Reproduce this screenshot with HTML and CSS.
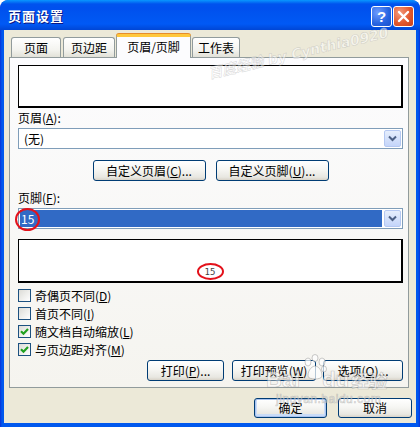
FILE: index.html
```html
<!DOCTYPE html>
<html lang="zh-CN">
<head>
    <meta charset="UTF-8">
    <title>页面设置</title>
    <link rel="stylesheet" href="styles.css">
</head>
<body>
<div class="window">
    <div class="titlebar">
        <span class="title">页面设置</span>
        <div class="caption-btns">
            <span class="cap-btn help">?</span>
            <span class="cap-btn close">
                <svg width="13" height="13" viewBox="0 0 13 13"><path d="M2 2 L11 11 M11 2 L2 11" stroke="#fff" stroke-width="2.4" stroke-linecap="round"/></svg>
            </span>
        </div>
    </div>

    <div class="client">
        <div class="tabs">
            <div class="tab tab-page">页面</div>
            <div class="tab tab-margin">页边距</div>
            <div class="tab tab-hf active">页眉/页脚</div>
            <div class="tab tab-sheet">工作表</div>
        </div>

        <div class="panel">
            <div class="preview preview-header"></div>

            <div class="label">页眉(<u>A</u>):</div>
            <div class="combo">
                <span class="combo-text">(无)</span>
                <span class="drop"><svg width="9" height="7" viewBox="0 0 9 7"><path d="M1 1.5 L4.5 5 L8 1.5" fill="none" stroke="#4D6185" stroke-width="2"/></svg></span>
            </div>

            <div class="custom-row">
                <button class="btn btn-custom">自定义页眉(<u>C</u>)...</button>
                <button class="btn btn-custom">自定义页脚(<u>U</u>)...</button>
            </div>

            <div class="label label-footer">页脚(<u>F</u>):</div>
            <div class="combo">
                <span class="combo-text selected">15</span>
                <span class="drop"><svg width="9" height="7" viewBox="0 0 9 7"><path d="M1 1.5 L4.5 5 L8 1.5" fill="none" stroke="#4D6185" stroke-width="2"/></svg></span>
                <span class="mark mark-combo"></span>
            </div>

            <div class="preview preview-footer">
                <span class="page-num">15<span class="mark mark-num"></span></span>
            </div>

            <div class="checks">
                <label class="check-row"><span class="box"></span>奇偶页不同(<u>D</u>)</label>
                <label class="check-row"><span class="box"></span>首页不同(<u>I</u>)</label>
                <label class="check-row"><span class="box checked"><svg width="9" height="9" viewBox="0 0 9 9"><path d="M1 4.2 L3.5 6.7 L8 2" fill="none" stroke="#21A121" stroke-width="2.2"/></svg></span>随文档自动缩放(<u>L</u>)</label>
                <label class="check-row"><span class="box checked"><svg width="9" height="9" viewBox="0 0 9 9"><path d="M1 4.2 L3.5 6.7 L8 2" fill="none" stroke="#21A121" stroke-width="2.2"/></svg></span>与页边距对齐(<u>M</u>)</label>
            </div>

            <div class="panel-btns">
                <button class="btn btn-print">打印(<u>P</u>)...</button>
                <button class="btn btn-preview">打印预览(<u>W</u>)</button>
                <button class="btn btn-options">选项(<u>O</u>)...</button>
            </div>
        </div>

        <div class="dialog-btns">
            <button class="btn btn-ok">确定</button>
            <button class="btn btn-cancel">取消</button>
        </div>
    </div>

    <!-- watermarks over the screenshot -->
    <div class="wm-author">百度经验 by Cynthia0920</div>
    <div class="wm-baidu">
        <div class="wm-logo">
            <span>Bai</span>
            <svg class="wm-paw" width="26" height="28" viewBox="0 0 26 28">
                <g fill="rgba(255,255,255,0.7)" stroke="rgba(140,140,140,0.45)" stroke-width="1">
                    <ellipse cx="6" cy="8" rx="3" ry="4"/>
                    <ellipse cx="13" cy="4" rx="3" ry="3.5"/>
                    <ellipse cx="20" cy="8" rx="3" ry="4"/>
                    <ellipse cx="22" cy="15" rx="2.5" ry="3"/>
                    <path d="M6 22 C6 15 11 12 13 12 C16 12 20 16 20 22 C20 26 6 26 6 22 Z"/>
                </g>
            </svg>
            <span>du</span>
            <span class="wm-jy">经验</span>
        </div>
        <div class="wm-url">jingyan.baidu.com</div>
    </div>
</div>
</body>
</html>
```

FILE: styles.css
```css
body {
    margin: 0;
    font-family: "Noto Sans CJK SC", "Liberation Sans", sans-serif;
    font-size: 12px;
    color: #000;
}

.window {
    position: relative;
    width: 420px;
    height: 427px;
    box-sizing: border-box;
    display: flex;
    flex-direction: column;
    background: linear-gradient(90deg, #0831D9, #0058EE 2px, #0058EE 418px, #0831D9);
    border-radius: 8px 8px 0 0;
    overflow: hidden;
}

.titlebar {
    height: 30px;
    flex: none;
    display: flex;
    align-items: center;
    justify-content: space-between;
    padding: 0 6px 0 8px;
    background: linear-gradient(#0997FF, #0053EE 4px, #0050EE 8px, #0055F0 50%, #0059F5 80%, #0046D5);
    border-radius: 8px 8px 0 0;
}

.title {
    color: #fff;
    font-weight: bold;
    font-size: 13px;
    letter-spacing: 1px;
    text-shadow: 1px 1px 0 #0A1883;
}

.caption-btns {
    display: flex;
    gap: 1px;
    padding-top: 2px;
}

.cap-btn {
    width: 19px;
    height: 19px;
    border: 1px solid #fff;
    border-radius: 3px;
    display: flex;
    align-items: center;
    justify-content: center;
    color: #fff;
    font-family: "Liberation Sans", sans-serif;
    font-weight: bold;
    font-size: 15px;
}

.help {
    background: radial-gradient(circle at 30% 30%, #6E9CFF, #2663E0 60%, #1A4FCB);
}

.close {
    background: radial-gradient(circle at 30% 30%, #F29A7C, #E2582E 55%, #C8401A);
}

.client {
    flex: 1;
    margin: 0 4px 4px;
    background: #ECE9D8;
}

/* tabs */
.tabs {
    height: 27px;
    display: flex;
    align-items: flex-end;
    gap: 2px;
    padding-left: 7px;
}

.tab {
    height: 20px;
    box-sizing: border-box;
    border: 1px solid #919B9C;
    border-bottom: none;
    border-radius: 3px 3px 0 0;
    background: linear-gradient(#FFFFFF, #F4F4F0 60%, #E2E1D8);
    text-align: center;
    line-height: 19px;
}

.tab-page { width: 50px; }
.tab-margin { width: 52px; }
.tab-sheet { width: 48px; }

.tab-hf {
    width: 75px;
    margin: 0 -1px;
}

.tab.active {
    position: relative;
    height: 24px;
    margin-bottom: -1px;
    background: #FCFCFE;
    border-top: 3px solid #FFC83C;
    box-shadow: 0 -1px 0 #E68B2C;
    line-height: 19px;
}

/* panel */
.panel {
    width: 400px;
    box-sizing: border-box;
    margin-left: 5px;
    border: 1px solid #919B9C;
    background: linear-gradient(#FCFCFE, #F5F4EF);
    padding: 7px 5px 6px 8px;
}

.preview {
    box-sizing: border-box;
    background: #fff;
    border: 1px solid #000;
    border-right-width: 2px;
    border-bottom-width: 2px;
}

.preview-header {
    height: 43px;
}

.preview-footer {
    height: 44px;
    margin-top: 10px;
    display: flex;
    justify-content: center;
    align-items: flex-end;
    padding-bottom: 4px;
}

.label {
    margin-top: 2px;
    height: 16px;
    line-height: 16px;
}

.label-footer {
    margin-top: 9px;
}

.combo {
    position: relative;
    height: 21px;
    box-sizing: border-box;
    margin-top: 2px;
    border: 1px solid #7F9DB9;
    background: #fff;
    display: flex;
}

.combo-text {
    flex: 1;
    line-height: 19px;
    padding-left: 5px;
}

.combo-text.selected {
    margin: 1px;
    padding-left: 1px;
    background: #316AC5;
    color: #fff;
    line-height: 17px;
}

.drop {
    width: 15px;
    margin: 1px;
    border: 1px solid #B5C8F2;
    border-radius: 2px;
    background: linear-gradient(#E6EEFC, #C4D5FA);
    display: flex;
    align-items: center;
    justify-content: center;
}

/* red annotation ellipses */
.mark {
    position: absolute;
    border: 2px solid #E3121B;
    border-radius: 50%;
    box-sizing: border-box;
}

.mark-combo {
    left: -4px;
    top: -1px;
    width: 25px;
    height: 23px;
}

.page-num {
    position: relative;
    font-family: "DejaVu Sans Mono", monospace;
    font-size: 9px;
    color: #444;
    line-height: 10px;
}

.mark-num {
    left: -8px;
    top: -4px;
    width: 27px;
    height: 17px;
}

/* buttons */
.btn {
    height: 21px;
    box-sizing: border-box;
    padding: 0;
    border: 1px solid #003C74;
    border-radius: 3px;
    background: linear-gradient(#FFFFFF, #F6F6F3 45%, #E8E7E1 85%, #D8D3C8);
    font-family: inherit;
    font-size: 12px;
    color: #000;
    line-height: 18px;
}

.custom-row {
    margin-top: 11px;
    display: flex;
    justify-content: center;
    gap: 10px;
}

.btn-custom {
    width: 113px;
}

.checks {
    margin-top: 3px;
}

.check-row {
    height: 18px;
    display: flex;
    align-items: center;
}

.box {
    width: 13px;
    height: 13px;
    box-sizing: border-box;
    border: 1px solid #1C5180;
    background: linear-gradient(135deg, #DCDCD7, #FFFFFF);
    margin-right: 4px;
    display: flex;
    align-items: center;
    justify-content: center;
}

.panel-btns {
    margin-top: 2px;
    display: flex;
    justify-content: flex-end;
    gap: 8px;
}

.btn-print { width: 77px; }
.btn-preview { width: 84px; }
.btn-options { width: 80px; margin-left: -1px; }

.dialog-btns {
    margin-top: 10px;
    padding-right: 4px;
    display: flex;
    justify-content: flex-end;
    gap: 11px;
}

.btn-ok {
    width: 73px;
    height: 20px;
    box-shadow: inset 0 0 0 1px #A9C4F0, inset 0 -1px 0 2px #CADCF7;
}

.btn-cancel {
    width: 74px;
    height: 20px;
}

/* watermarks */
.wm-author {
    position: absolute;
    left: 206px;
    top: 42px;
    transform: rotate(-13deg);
    font-family: "DejaVu Sans", "Noto Sans CJK SC", sans-serif;
    font-style: italic;
    font-weight: bold;
    font-size: 14px;
    color: rgba(255, 255, 255, 0.5);
    -webkit-text-stroke: 0.6px rgba(150, 150, 150, 0.35);
    white-space: nowrap;
}

.wm-baidu {
    position: absolute;
    left: 266px;
    top: 352px;
    color: rgba(255, 255, 255, 0.55);
    -webkit-text-stroke: 0.7px rgba(130, 130, 130, 0.4);
}

.wm-logo {
    display: flex;
    align-items: flex-end;
    font-family: "Liberation Sans", sans-serif;
    font-weight: bold;
    font-size: 22px;
    line-height: 24px;
    height: 40px;
}

.wm-paw {
    margin: 0 -6px 10px 2px;
}

.wm-jy {
    font-family: "Noto Sans CJK SC", sans-serif;
    font-size: 18px;
    margin-left: 2px;
}

.wm-url {
    font-family: "Liberation Sans", sans-serif;
    font-size: 12px;
    margin-left: 10px;
    letter-spacing: 0.5px;
}
```
